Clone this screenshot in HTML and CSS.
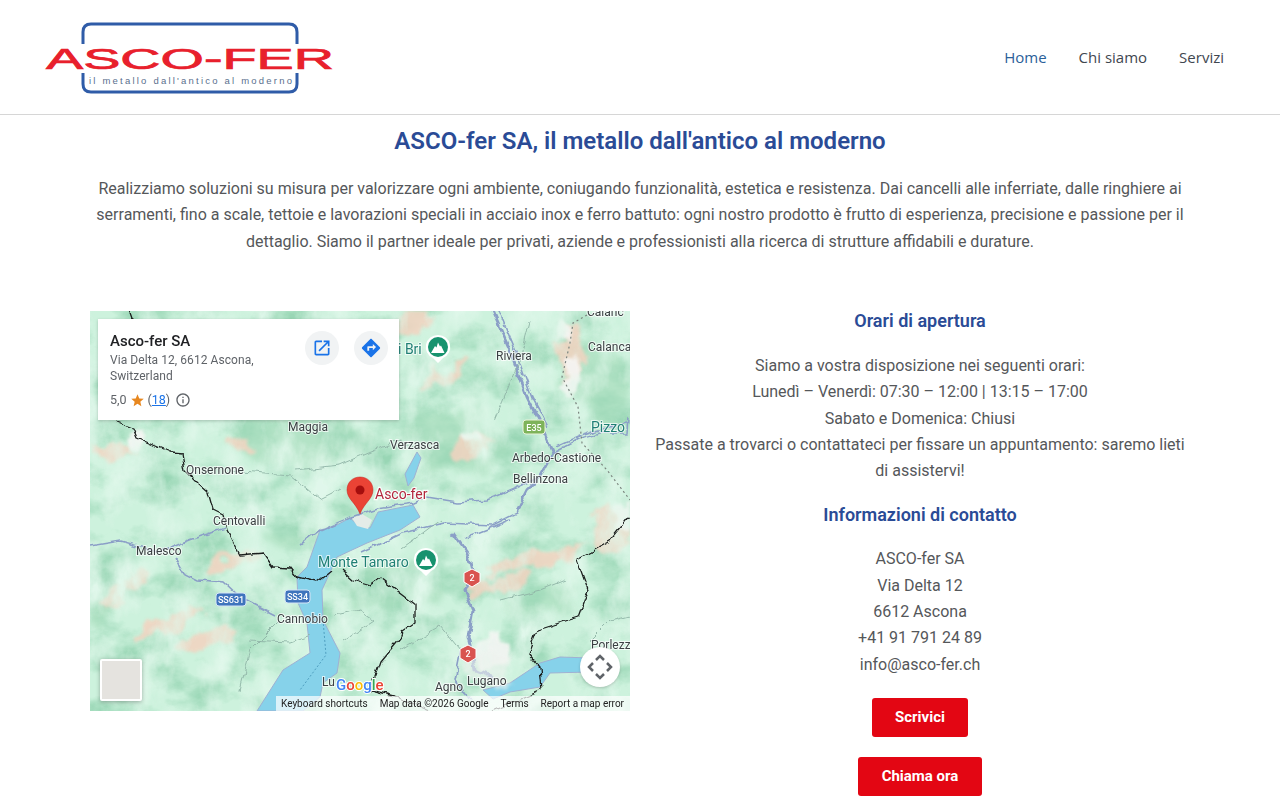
FILE: index.html
```html
<!DOCTYPE html>
<html lang="it">
<head>
    <meta charset="UTF-8">
    <title>ASCO-fer SA</title>
    <link rel="stylesheet" href="styles.css">
</head>
<body>

    <!-- Header -->
    <header class="site-header">
        <svg class="logo" width="300" height="80" viewBox="40 18 300 80">
            <path class="logo-frame" d="M83 43V31q0-8 8-8H289q8 0 8 8V43M83 72V83q0 8 8 8H289q8 0 8-8V72"/>
            <text class="logo-name" x="46" y="68" textLength="288" lengthAdjust="spacingAndGlyphs">ASCO-FER</text>
            <text class="logo-tag" x="89" y="83" textLength="203">il metallo dall'antico al moderno</text>
        </svg>
        <nav class="main-nav">
            <a href="#" class="active">Home</a>
            <a href="#">Chi siamo</a>
            <a href="#">Servizi</a>
        </nav>
    </header>

    <main class="content">
        <h1>ASCO-fer SA, il metallo dall'antico al moderno</h1>
        <p class="intro">Realizziamo soluzioni su misura per valorizzare ogni ambiente, coniugando funzionalità, estetica e resistenza. Dai cancelli alle inferriate, dalle ringhiere ai serramenti, fino a scale, tettoie e lavorazioni speciali in acciaio inox e ferro battuto: ogni nostro prodotto è frutto di esperienza, precisione e passione per il dettaglio. Siamo il partner ideale per privati, aziende e professionisti alla ricerca di strutture affidabili e durature.</p>

        <div class="columns">
            <!-- Map -->
            <div class="map">
                <svg class="map-canvas" width="540" height="400" viewBox="90 311 540 400">
                    <defs>
                        <filter id="hills" filterUnits="userSpaceOnUse" x="90" y="311" width="540" height="400" color-interpolation-filters="sRGB">
                            <feTurbulence type="fractalNoise" baseFrequency="0.022 0.03" numOctaves="6" seed="11"/>
                            <feColorMatrix type="matrix" values="0 0 0 0 0.6  0 0 0 0 0.84  0 0 0 0 0.71  2.4 0 0 0 -1"/>
                        </filter>
                        <filter id="ridges" filterUnits="userSpaceOnUse" x="90" y="311" width="540" height="400" color-interpolation-filters="sRGB">
                            <feTurbulence type="fractalNoise" baseFrequency="0.03 0.018" numOctaves="5" seed="29"/>
                            <feColorMatrix type="matrix" values="0 0 0 0 0.88  0 0 0 0 0.97  0 0 0 0 0.92  0 2.4 0 0 -1"/>
                        </filter>
                        <filter id="rough" filterUnits="userSpaceOnUse" x="90" y="311" width="540" height="400" color-interpolation-filters="sRGB">
                            <feTurbulence type="fractalNoise" baseFrequency="0.05" numOctaves="4" seed="3" result="n"/>
                            <feDisplacementMap in="SourceGraphic" in2="n" scale="28" xChannelSelector="R" yChannelSelector="G"/>
                            <feGaussianBlur stdDeviation="1.6"/>
                        </filter>
                        <filter id="rough-wide" filterUnits="userSpaceOnUse" x="90" y="311" width="540" height="400" color-interpolation-filters="sRGB">
                            <feTurbulence type="fractalNoise" baseFrequency="0.03" numOctaves="4" seed="8" result="n"/>
                            <feDisplacementMap in="SourceGraphic" in2="n" scale="50" xChannelSelector="R" yChannelSelector="G"/>
                            <feGaussianBlur stdDeviation="3"/>
                        </filter>
                        <filter id="wiggle" filterUnits="userSpaceOnUse" x="90" y="311" width="540" height="400" color-interpolation-filters="sRGB">
                            <feTurbulence type="fractalNoise" baseFrequency="0.09" numOctaves="2" seed="5" result="n"/>
                            <feDisplacementMap in="SourceGraphic" in2="n" scale="7" xChannelSelector="R" yChannelSelector="G"/>
                        </filter>
                    </defs>

                    <rect class="land" x="90" y="311" width="540" height="400"/>
                    <g class="green" filter="url(#rough-wide)">
                        <ellipse cx="600" cy="390" rx="26" ry="50"/>
                        <ellipse cx="300" cy="440" rx="70" ry="26"/>
                        <ellipse cx="450" cy="440" rx="50" ry="34"/>
                        <ellipse cx="105" cy="610" rx="12" ry="24"/>
                        <ellipse cx="400" cy="590" rx="40" ry="26"/>
                        <ellipse cx="300" cy="540" rx="40" ry="14"/>
                        <ellipse cx="540" cy="600" rx="30" ry="16"/>
                    </g>
                    <rect x="90" y="311" width="540" height="400" filter="url(#hills)"/>
                    <g class="pink" filter="url(#rough)">
                        <ellipse cx="235" cy="560" rx="26" ry="6" transform="rotate(-12 235 560)"/>
                        <ellipse cx="125" cy="590" rx="30" ry="7" transform="rotate(-30 125 590)"/>
                        <ellipse cx="165" cy="625" rx="38" ry="7" transform="rotate(-25 165 625)"/>
                        <ellipse cx="205" cy="640" rx="30" ry="6" transform="rotate(-15 205 640)"/>
                        <ellipse cx="445" cy="375" rx="32" ry="8" transform="rotate(-28 445 375)"/>
                        <ellipse cx="470" cy="445" rx="26" ry="12" transform="rotate(-30 470 445)"/>
                        <ellipse cx="500" cy="585" rx="34" ry="8" transform="rotate(-10 500 585)"/>
                        <ellipse cx="610" cy="530" rx="16" ry="26"/>
                        <ellipse cx="570" cy="355" rx="12" ry="30"/>
                        <ellipse cx="115" cy="450" rx="24" ry="8"/>
                        <ellipse cx="535" cy="560" rx="50" ry="7" transform="rotate(-14 535 560)"/>
                        <ellipse cx="415" cy="320" rx="26" ry="7" transform="rotate(-20 415 320)"/>
                        <ellipse cx="240" cy="445" rx="18" ry="6"/>
                    </g>
                    <g class="snow" filter="url(#rough)">
                        <ellipse cx="572" cy="375" rx="8" ry="22"/>
                        <ellipse cx="565" cy="330" rx="7" ry="12"/>
                        <ellipse cx="475" cy="435" rx="10" ry="7"/>
                        <ellipse cx="625" cy="515" rx="10" ry="16"/>
                        <ellipse cx="135" cy="440" rx="12" ry="6"/>
                        <ellipse cx="492" cy="655" rx="18" ry="18"/>
                    </g>
                    <rect x="90" y="311" width="540" height="400" filter="url(#ridges)"/>

                    <!-- Water -->
                    <path class="water" d="M320 530L333 527L350 518L357 524L370 528L378 512L413 505L420 517L400 530L367 543L337 557L322 590L323 620L340 653L337 673L323 683L320 697L303 711H257L283 670L310 653L307 623L298 603L297 577L307 567Z"/>
                    <path class="water" d="M483 690L510 683L540 663L560 657L590 658V672L550 673L540 687L510 692L493 699Z"/>
                    <path class="water" d="M417 452L421 458L414 478L408 486L405 474Z"/>
                    <path class="delta" d="M352 518L362 514L372 520L368 529L357 526Z"/>
                    <path class="ferry" d="M323 620L326 655L300 690"/>

                    <!-- Roads -->
                    <g class="roads" filter="url(#wiggle)">
                        <path class="wide" d="M493 311L510 350L527 397L540 423L553 453L540 477L527 490L517 510"/>
                        <path d="M499 311L515 350L532 397L548 427"/>
                        <path d="M553 453L577 440L600 433L627 433L628 418"/>
                        <path d="M556 447L580 436L605 428L627 424"/>
                        <path d="M300 545L320 530L350 517L378 508L413 503L427 497"/>
                        <path d="M360 553L403 533L443 523L493 525L517 513L527 490"/>
                        <path d="M427 497L457 502L487 500L517 487L540 477"/>
                        <path class="wide" d="M453 533L467 553L473 573L465 590L473 610L468 637L473 657L475 670L493 677"/>
                        <path d="M467 537L490 528L510 520"/>
                        <path d="M461 650L455 680L470 700"/>
                        <path d="M90 546L120 541L160 552L190 540L225 528"/>
                        <path d="M175 557L185 575L197 581L225 583L240 597L275 615"/>
                    </g>
                    <g class="streams" filter="url(#wiggle)">
                        <path d="M295 470L340 465L400 440L415 450"/>
                        <path d="M248 640L290 642L310 635"/>
                        <path d="M335 615L360 610L375 620L345 640"/>
                        <path d="M400 650L440 625L460 650"/>
                        <path d="M500 600L540 590L565 580"/>
                        <path d="M230 470L290 475L320 500L340 490"/>
                        <path d="M530 320L520 360L495 420"/>
                        <path d="M590 640L610 620L630 615"/>
                        <path d="M400 550L440 520"/>
                        <path d="M240 690L250 650L280 620"/>
                    </g>
                    <path class="town" d="M468 660L515 650L510 685L480 680Z" filter="url(#rough)"/>

                    <!-- Borders -->
                    <g class="borders" filter="url(#wiggle)">
                        <path d="M128 311L132 322M117 422L133 428L137 438L170 452L182 453L185 470L198 483L208 492L213 510L223 515L227 530L240 555L263 553L273 567L290 568L297 577L317 582L332 570M342 570L353 580L370 585L380 578L415 605L415 623L402 632L400 638L380 662L370 690L400 698L430 711"/>
                        <path d="M630 517L610 542L577 560L588 590L578 617L537 630L528 653L540 667L542 690L493 711"/>
                    </g>
                    <path class="dotted" d="M587 315L573 323L570 343L562 377L578 407L582 443L607 470L630 500"/>

                    <!-- Labels -->
                    <g class="labels">
                        <text x="496" y="360">Riviera</text>
                        <text x="588" y="351">Calanca</text>
                        <text x="587" y="316">Calanc</text>
                        <text x="288" y="431">Maggia</text>
                        <text x="390" y="449">Verzasca</text>
                        <text x="512" y="462">Arbedo-Castione</text>
                        <text x="513" y="483">Bellinzona</text>
                        <text x="186" y="474">Onsernone</text>
                        <text x="213" y="525">Centovalli</text>
                        <text x="136" y="555">Malesco</text>
                        <text x="277" y="623">Cannobio</text>
                        <text x="467" y="685">Lugano</text>
                        <text x="435" y="691">Agno</text>
                        <text x="591" y="649">Porlezz</text>
                        <text x="322" y="686">Lu</text>
                    </g>
                    <g class="labels parks">
                        <text x="318" y="567">Monte Tamaro</text>
                        <text x="591" y="432">Pizzo</text>
                        <text x="398" y="354">i Bri</text>
                    </g>

                    <!-- Park markers -->
                    <g class="park-pin">
                        <path class="halo" d="M438 335a12 12 0 0 1 5 23l-5 5-5-5a12 12 0 0 1 5-23z"/>
                        <circle cx="438" cy="347" r="10"/>
                        <path class="peak" d="M431 353l4-7 1.500 1.500 1.500-5 2 4 1-1 3.500 7.500z"/>
                        <path class="halo" d="M426 548a12 12 0 0 1 5 23l-5 5-5-5a12 12 0 0 1 5-23z"/>
                        <circle cx="426" cy="560" r="10"/>
                        <path class="peak" d="M419 566l4-7 1.500 1.500 1.500-5 2 4 1-1 3.500 7.500z"/>
                    </g>

                    <!-- Road shields -->
                    <g class="shield-green">
                        <rect x="523" y="420" width="22" height="14" rx="3"/>
                        <text x="534" y="431">E35</text>
                    </g>
                    <g class="shield-blue">
                        <rect x="216" y="593" width="30" height="13" rx="3"/>
                        <text x="231" y="603">SS631</text>
                        <rect x="285" y="590" width="25" height="13" rx="3"/>
                        <text x="297.500" y="600">SS34</text>
                    </g>
                    <g class="shield-red">
                        <path d="M472 569l8 4v9l-8 5-8-5v-9z"/>
                        <text x="472" y="581">2</text>
                        <path d="M468 645l8 4v9l-8 5-8-5v-9z"/>
                        <text x="468" y="657">2</text>
                    </g>

                    <!-- Place pin -->
                    <text class="place-label" x="375" y="499">Asco-fer</text>
                    <path class="pin" d="M360 477c-7.500 0-13 5.500-13 13 0 9 9 13 13 24 4-11 13-15 13-24 0-7.500-5.500-13-13-13z"/>
                    <circle class="pin-dot" cx="360" cy="490" r="4.500"/>

                    <text class="google" x="336" y="690"><tspan class="g-blue">G</tspan><tspan class="g-red">o</tspan><tspan class="g-yellow">o</tspan><tspan class="g-blue">g</tspan><tspan class="g-green">l</tspan><tspan class="g-red">e</tspan></text>
                </svg>

                <div class="place-card">
                    <div class="place-info">
                        <div class="place-name">Asco-fer SA</div>
                        <div class="place-address">Via Delta 12, 6612 Ascona, Switzerland</div>
                        <div class="place-rating">
                            <span>5,0</span>
                            <svg class="star" width="15" height="15" viewBox="0 0 24 24"><path d="M12 17.270L18.180 21l-1.640-7.030L22 9.240l-7.190-.61L12 2 9.190 8.630 2 9.240l5.460 4.730L5.820 21z"/></svg>
                            <span>(<a href="#">18</a>)</span>
                            <svg class="info" width="16" height="16" viewBox="0 0 24 24"><path d="M11 7h2v2h-2zm0 4h2v6h-2zm1-9C6.480 2 2 6.480 2 12s4.480 10 10 10 10-4.480 10-10S17.520 2 12 2zm0 18c-4.410 0-8-3.590-8-8s3.590-8 8-8 8 3.590 8 8-3.590 8-8 8z"/></svg>
                        </div>
                    </div>
                    <div class="place-actions">
                        <span class="round-btn"><svg width="20" height="20" viewBox="0 0 24 24"><path d="M19 19H5V5h7V3H5c-1.110 0-2 .9-2 2v14c0 1.100.89 2 2 2h14c1.100 0 2-.9 2-2v-7h-2v7zM14 3v2h3.590l-9.830 9.830 1.410 1.410L19 6.410V10h2V3h-7z"/></svg></span>
                        <span class="round-btn"><svg width="22" height="22" viewBox="0 0 24 24"><path d="M21.710 11.290l-9-9c-.39-.39-1.020-.39-1.410 0l-9 9c-.39.39-.39 1.020 0 1.410l9 9c.39.39 1.020.39 1.410 0l9-9c.39-.38.39-1.010 0-1.410zM14 14.500V12h-4v3H8v-4c0-.55.45-1 1-1h5V7.500l3.500 3.500-3.500 3.500z"/></svg></span>
                    </div>
                </div>

                <div class="pegman-box"></div>
                <div class="map-move">
                    <svg width="26" height="26" viewBox="0 0 26 26"><path d="M9 6l4-4 4 4M9 20l4 4 4-4M6 9l-4 4 4 4M20 9l4 4-4 4"/></svg>
                </div>
                <div class="map-attrib">
                    <span>Keyboard shortcuts</span>
                    <span>Map data ©2026 Google</span>
                    <span>Terms</span>
                    <span>Report a map error</span>
                </div>
            </div>

            <!-- Opening hours and contacts -->
            <div class="info-col">
                <h3>Orari di apertura</h3>
                <p>Siamo a vostra disposizione nei seguenti orari:<br>
                Lunedì – Venerdì: 07:30 – 12:00 | 13:15 – 17:00<br>
                Sabato e Domenica: Chiusi<br>
                Passate a trovarci o contattateci per fissare un appuntamento: saremo lieti di assistervi!</p>
                <h3>Informazioni di contatto</h3>
                <p>ASCO-fer SA<br>
                Via Delta 12<br>
                6612 Ascona<br>
                +41 91 791 24 89<br>
                info@asco-fer.ch</p>
                <div class="buttons">
                    <a href="#" class="btn">Scrivici</a>
                    <a href="#" class="btn">Chiama ora</a>
                </div>
            </div>
        </div>
    </main>

</body>
</html>
```

FILE: styles.css
```css
:root {
    --blue: #2a4b96;
    --red: #e30613;
    --text: #55575a;
}

* {
    margin: 0;
    padding: 0;
    box-sizing: border-box;
}

body {
    font-family: Roboto, 'Liberation Sans', sans-serif;
    font-size: 16px;
    line-height: 26.4px;
    color: var(--text);
    background: #fff;
}

.site-header {
    height: 115px;
    display: flex;
    align-items: center;
    justify-content: space-between;
    padding: 0 56px 0 40px;
    border-bottom: 1px solid #d6d6d6;
}

.logo {
    display: block;
    margin-top: 3px;
}

.logo-frame {
    fill: none;
    stroke: #2f5ca8;
    stroke-width: 3;
}

.logo-name {
    font-family: 'Liberation Sans', sans-serif;
    font-size: 29px;
    fill: #e8202c;
    stroke: #e8202c;
    stroke-width: 0.7px;
}

.logo-tag {
    font-family: 'Liberation Sans', sans-serif;
    font-size: 9.500px;
    fill: #5a6f8e;
}

.main-nav {
    display: flex;
    gap: 32px;
    font-family: 'Open Sans', sans-serif;
    font-size: 15px;
}

.main-nav a {
    color: #3f4750;
    text-decoration: none;
}

.main-nav a.active {
    color: #2a6099;
}

.content {
    width: 1100px;
    margin: 0 auto;
}

h1 {
    font-size: 24px;
    font-weight: 600;
    line-height: 29px;
    color: var(--blue);
    text-align: center;
    margin-top: 12px;
    margin-bottom: 20px;
}

.intro {
    text-align: center;
}

.columns {
    display: grid;
    grid-template-columns: 540px 540px;
    gap: 20px;
    margin-top: 56px;
}

/* Map */
.map {
    position: relative;
    width: 540px;
    height: 400px;
    overflow: hidden;
}

.map-canvas {
    display: block;
}

.land { fill: #cdf2dd; }
.green { fill: #a9deBd; opacity: 0.7; }
.pink { fill: #f3d3c0; opacity: 0.85; }
.snow { fill: #f6f6f4; opacity: 0.9; }
.water { fill: #86d2ea; stroke: #9fb0d2; stroke-width: 1; }
.delta { fill: #e4ece8; }
.ferry { fill: none; stroke: #4f9fc0; stroke-width: 1; stroke-dasharray: 2 2; }
.town { fill: #eef2ee; opacity: 0.6; }

.roads path {
    fill: none;
    stroke: #8b9fc7;
    stroke-width: 1.6;
}

.roads path.wide { stroke-width: 3; }

.streams path {
    fill: none;
    stroke: #8fb3a6;
    stroke-width: 0.9;
}

.borders path {
    fill: none;
    stroke: #1c1f1e;
    stroke-width: 1.3;
    stroke-linejoin: round;
}

.dotted {
    fill: none;
    stroke: #7b857f;
    stroke-width: 1.2;
    stroke-dasharray: 2 3;
}

.labels text {
    font-size: 12px;
    fill: #3b4043;
    stroke: rgba(255, 255, 255, 0.7);
    stroke-width: 2px;
    paint-order: stroke;
}

.labels.parks text {
    font-size: 14px;
    fill: #1f7f74;
}

.park-pin .halo { fill: #fff; }
.park-pin circle { fill: #17926e; }
.park-pin .peak { fill: #fff; }

.shield-green rect { fill: #7eb35a; stroke: #e9f3d9; }
.shield-blue rect { fill: #3f74bd; stroke: #d6e4f6; }
.shield-red path { fill: #d9534f; stroke: #fff; }

.shield-green text,
.shield-blue text,
.shield-red text {
    font-size: 9px;
    font-weight: 500;
    fill: #fff;
    text-anchor: middle;
}

.place-label {
    font-size: 14px;
    fill: #b3263c;
    stroke: rgba(255, 255, 255, 0.85);
    stroke-width: 2.5px;
    paint-order: stroke;
}

.pin { fill: #ea4335; stroke: #c5221f; stroke-width: 0.5; }
.pin-dot { fill: #a50e0e; }

.google {
    font-size: 15px;
    font-weight: 500;
    stroke: #fff;
    stroke-width: 2px;
    paint-order: stroke;
}

.g-blue { fill: #4285f4; }
.g-red { fill: #ea4335; }
.g-yellow { fill: #fbbc05; }
.g-green { fill: #34a853; }

.place-card {
    position: absolute;
    top: 8px;
    left: 8px;
    width: 301px;
    height: 101px;
    background: #fff;
    box-shadow: 0 1px 3px rgba(0, 0, 0, 0.2);
    display: flex;
    justify-content: space-between;
    padding: 12px 12px 0 12px;
}

.place-info {
    width: 165px;
}

.place-name {
    font-size: 15px;
    font-weight: 500;
    line-height: 20px;
    color: #202124;
}

.place-address {
    font-size: 12px;
    letter-spacing: 0.06px;
    line-height: 16px;
    color: #5f6368;
    margin-top: 1px;
}

.place-rating {
    display: flex;
    align-items: center;
    gap: 3px;
    font-size: 12.500px;
    line-height: 16px;
    color: #5f6368;
    margin-top: 8px;
}

.place-rating a {
    color: #1a73e8;
    text-decoration: underline;
}

.star { fill: #e7871f; }
.info { fill: #5f6368; margin-left: 2px; }

.place-actions {
    display: flex;
    gap: 15px;
    margin-right: -1px;
}

.round-btn {
    width: 34px;
    height: 34px;
    border-radius: 50%;
    background: #f1f3f4;
    display: flex;
    align-items: center;
    justify-content: center;
}

.round-btn svg { fill: #1a73e8; }

.pegman-box {
    position: absolute;
    left: 10px;
    bottom: 10px;
    width: 42px;
    height: 42px;
    background: #e5e3df;
    border: 2px solid #fff;
    border-radius: 2px;
    box-shadow: 0 1px 4px rgba(0, 0, 0, 0.3);
}

.map-move {
    position: absolute;
    right: 10px;
    top: 336px;
    width: 40px;
    height: 40px;
    border-radius: 50%;
    background: #fff;
    box-shadow: 0 1px 3px rgba(0, 0, 0, 0.2);
    display: flex;
    align-items: center;
    justify-content: center;
}

.map-move path {
    fill: none;
    stroke: #5f6368;
    stroke-width: 2.5;
}

.map-attrib {
    position: absolute;
    right: 0;
    bottom: 0;
    height: 15px;
    width: 354px;
    display: flex;
    justify-content: space-between;
    padding: 0 6px 0 5px;
    background: rgba(255, 255, 255, 0.7);
    font-size: 10px;
    line-height: 15px;
    color: #222;
    white-space: nowrap;
}

/* Right column */
.info-col {
    text-align: center;
    margin-top: -1px;
}

.info-col h3 {
    font-size: 18px;
    font-weight: 600;
    line-height: 22px;
    color: var(--blue);
    margin-bottom: 20.600px;
}

.info-col p {
    margin-bottom: 18.800px;
}

.buttons {
    padding-top: 1.200px;
}

.btn {
    display: block;
    width: fit-content;
    margin: 0 auto 20px;
    padding: 0 23.5px;
    height: 39px;
    line-height: 38px;
    background: var(--red);
    color: #fff;
    font-size: 15px;
    font-weight: 700;
    text-decoration: none;
    border-radius: 3px;
}
```
